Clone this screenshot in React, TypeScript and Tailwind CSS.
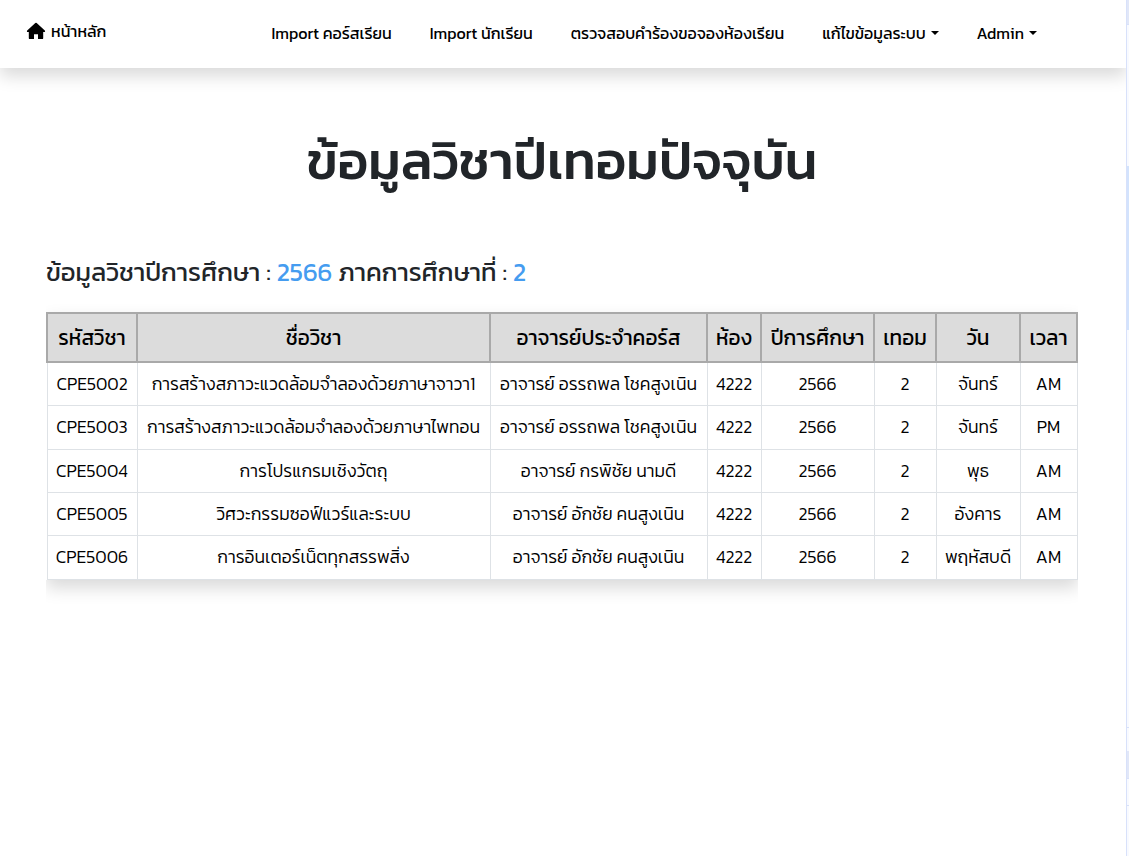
const navItems = [
  { text: "Import คอร์สเรียน", menu: false },
  { text: "Import นักเรียน", menu: false },
  { text: "ตรวจสอบคำร้องขอจองห้องเรียน", menu: false },
  { text: "แก้ไขข้อมูลระบบ", menu: true },
  { text: "Admin", menu: true },
];

const columns = ["รหัสวิชา", "ชื่อวิชา", "อาจารย์ประจำคอร์ส", "ห้อง", "ปีการศึกษา", "เทอม", "วัน", "เวลา"];

const rows = [
  ["CPE5002", "การสร้างสภาวะแวดล้อมจำลองด้วยภาษาจาวา1", "อาจารย์ อรรถพล โชคสูงเนิน", "4222", "2566", "2", "จันทร์", "AM"],
  ["CPE5003", "การสร้างสภาวะแวดล้อมจำลองด้วยภาษาไพทอน", "อาจารย์ อรรถพล โชคสูงเนิน", "4222", "2566", "2", "จันทร์", "PM"],
  ["CPE5004", "การโปรแกรมเชิงวัตถุ", "อาจารย์ กรพิชัย นามดี", "4222", "2566", "2", "พุธ", "AM"],
  ["CPE5005", "วิศวะกรรมซอฟ์แวร์และระบบ", "อาจารย์ อักชัย คนสูงเนิน", "4222", "2566", "2", "อังคาร", "AM"],
  ["CPE5006", "การอินเตอร์เน็ตทุกสรรพสิ่ง", "อาจารย์ อักชัย คนสูงเนิน", "4222", "2566", "2", "พฤหัสบดี", "AM"],
];

const rowHeights = ["h-[43px]", "h-[44px]", "h-[43px]", "h-[43px]", "h-[44px]"];

function Navbar() {
  return (
    <nav className="flex h-[68px] w-full whitespace-nowrap bg-white text-[16px] leading-6 text-black shadow-[0_8px_16px_rgba(0,0,0,0.15)]">
      <a className="ml-[26px] mt-[19px] flex h-6 w-[245.500px] items-center">
        <svg viewBox="0 0 20 20" className="mr-[5px] h-[20px] w-[20px] fill-black">
          <path d="M10 1.800a1 1 0 0 0-.7.3L1.200 9.400c-.6.6-.3 1.600.6 1.600h1v6.200c0 .5.4.9.9.9H8v-4.800h4v4.800h4.300c.5 0 .9-.4.9-.9V11h1c.9 0 1.200-1 .6-1.600L10.700 2.100a1 1 0 0 0-.7-.3z" />
        </svg>
        หน้าหลัก
      </a>
      <div className="mt-[21px] flex h-6 gap-[38px]">
        {navItems.map((item) => (
          <a key={item.text} className="flex items-center">
            {item.text}
            {item.menu && <span className="ml-[5px] border-x-[4.8px] border-t-[4.8px] border-x-transparent border-t-black" />}
          </a>
        ))}
      </div>
    </nav>
  );
}

function CourseTable() {
  return (
    <div className="ml-[46px] mt-[3px] w-[1032px] overflow-hidden pb-6 pt-[19px]">
      <table className="w-[1032px] table-fixed whitespace-nowrap border-collapse text-center text-black shadow-[0_8px_16px_rgba(0,0,0,0.15)]">
        <colgroup>
          <col className="w-[90px]" />
          <col className="w-[353px]" />
          <col className="w-[217px]" />
          <col className="w-[54px]" />
          <col className="w-[113px]" />
          <col className="w-[62px]" />
          <col className="w-[84px]" />
          <col className="w-[57px]" />
        </colgroup>
        <thead>
          <tr className="h-[49px] bg-[#dcdcdc] text-[20.800px] leading-6">
            {columns.map((column) => (
              <th key={column} className="border-2 border-[#a9a9a9] p-0 font-normal">
                {column}
              </th>
            ))}
          </tr>
        </thead>
        <tbody>
          {rows.map((row, rowIndex) => (
            <tr key={row[0]} className={`bg-white text-[17.600px] leading-6 ${rowHeights[rowIndex]}`}>
              {row.map((text, index) => (
                <td key={index} className="border border-[#dee2e6] p-0 font-light">
                  {text}
                </td>
              ))}
            </tr>
          ))}
        </tbody>
      </table>
    </div>
  );
}

function SideEdge() {
  return (
    <div className="flex w-[3px] shrink-0 flex-col border-l border-[#d8e1fa] bg-[#f8faff]">
      <div className="h-[25px] border-b border-[#d8e1fa] bg-[#e1e7f8]" />
      <div className="h-[141px]" />
      <div className="h-[164px] bg-[#d3e3fd]" />
      <div className="h-[398px] border-b border-[#d8e1fa]" />
      <div className="h-[23px]" />
      <div className="h-[28px] border-b border-[#d8e1fa] bg-[#e1e7f8]" />
      <div className="h-[27px] border-b border-[#d8e1fa]" />
    </div>
  );
}

export default function App() {
  return (
    <div className="flex h-[856px] w-[1129px] overflow-hidden bg-white font-['Kanit',sans-serif]">
      <main className="w-[1126px] overflow-hidden">
        <Navbar />
        <h1 className="mt-[54px] flex h-[78px] w-[1124px] items-center justify-center text-[52.800px] font-medium leading-[78px] text-[#212529]">
          ข้อมูลวิชาปีเทอมปัจจุบัน
        </h1>
        <h2 className="ml-[46px] mt-[54px] h-[36px] text-[25.600px] font-normal leading-9 text-[#212529]">
          ข้อมูลวิชาปีการศึกษา : <span className="text-[#459cf0]">2566</span> ภาคการศึกษาที่ : <span className="text-[#459cf0]">2</span>
        </h2>
        <CourseTable />
      </main>
      <SideEdge />
    </div>
  );
}
